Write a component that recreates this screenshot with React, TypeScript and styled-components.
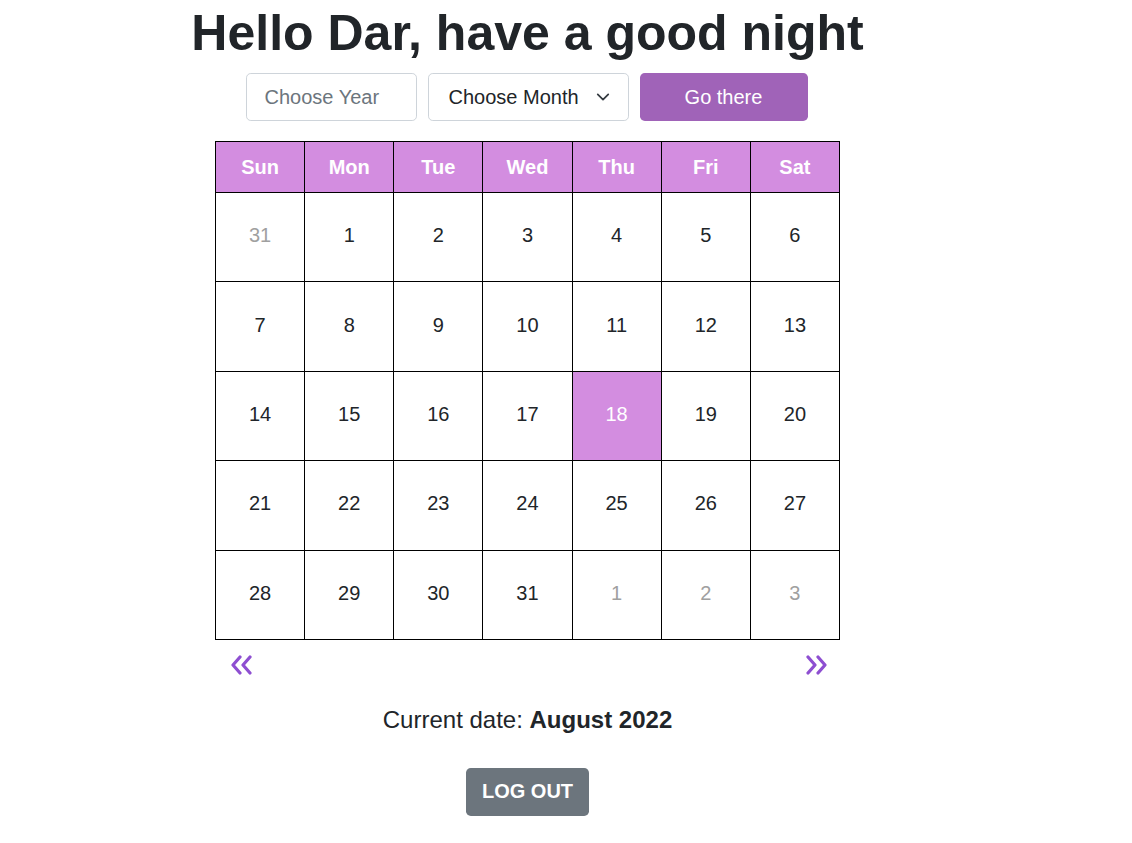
import React from "react";
import styled, { createGlobalStyle } from "styled-components";

const Global = createGlobalStyle`
  html, body { margin: 0; padding: 0; background: #fff; }
  body { font-family: "Liberation Sans", Arial, sans-serif; color: #212529; }
  * { box-sizing: border-box; }
`;

const Page = styled.div`
  width: 1055px;
  display: flex;
  flex-direction: column;
  align-items: center;
`;

const Title = styled.h1`
  margin: 3px 0 10px;
  font-size: 50px;
  line-height: 60px;
  font-weight: 700;
  color: #212529;
  white-space: nowrap;
`;

const Controls = styled.div`
  display: flex;
  gap: 11px;
  margin-bottom: 20px;
  margin-left: -2px;
`;

const YearInput = styled.input`
  width: 171px;
  height: 48px;
  padding: 0 18px;
  font-family: inherit;
  font-size: 20px;
  color: #212529;
  border: 1px solid #ced4da;
  border-radius: 4.8px;
  outline: none;
  &::placeholder { color: #6c757d; }
`;

const SelectWrap = styled.div`
  position: relative;
  width: 201px;
  height: 48px;
`;

const MonthSelect = styled.select`
  appearance: none;
  width: 100%;
  height: 100%;
  padding: 0 40px 0 20px;
  font-family: inherit;
  font-size: 20px;
  color: #212529;
  background: #fff;
  border: 1px solid #ced4da;
  border-radius: 4.8px;
  outline: none;
`;

const Caret = styled.svg`
  position: absolute;
  right: 19px;
  top: 18px;
  width: 14px;
  height: 12px;
  pointer-events: none;
`;

const GoButton = styled.button`
  width: 168px;
  height: 48px;
  border: none;
  border-radius: 4.8px;
  background: #a063b8;
  color: #fff;
  font-family: inherit;
  font-size: 20px;
`;

const Calendar = styled.table`
  width: 625px;
  border-collapse: collapse;
  table-layout: fixed;
  border: 1px solid #000;
`;

const HeadCell = styled.th`
  height: 51px;
  background: #d38de0;
  color: #fff;
  font-size: 20px;
  font-weight: 700;
  border: 1px solid #000;
  padding: 0;
`;

const DayCell = styled.td<{ $muted?: boolean; $today?: boolean }>`
  height: 89.4px;
  text-align: center;
  vertical-align: middle;
  font-size: 20px;
  border: 1px solid #000;
  padding: 0 0 3px;
  color: ${(p) => (p.$today ? "#fff" : p.$muted ? "#a0a0a0" : "#212529")};
  background: ${(p) => (p.$today ? "#d38de0" : "#fff")};
`;

const NavRow = styled.div`
  width: 625px;
  display: flex;
  justify-content: space-between;
  padding: 15px 13px 0 16px;
  height: 55px;
`;

const NavButton = styled.button`
  border: none;
  background: none;
  padding: 0;
  width: 21px;
  height: 20px;
  cursor: pointer;
  display: flex;
`;

const CurrentDate = styled.p`
  margin: 7px 0 0;
  font-size: 24px;
  line-height: 36px;
  color: #212529;
  strong { font-weight: 700; }
`;

const LogOut = styled.button`
  margin-top: 30px;
  width: 123px;
  height: 48px;
  border: none;
  border-radius: 4.8px;
  background: #6c757d;
  color: #fff;
  font-family: inherit;
  font-size: 20px;
  font-weight: 700;
`;

const days = ["Sun", "Mon", "Tue", "Wed", "Thu", "Fri", "Sat"];

type Cell = { n: number; muted?: boolean };
const cells: Cell[] = [
  { n: 31, muted: true },
  ...Array.from({ length: 31 }, (_, i) => ({ n: i + 1 })),
  { n: 1, muted: true },
  { n: 2, muted: true },
  { n: 3, muted: true },
];
const weeks: Cell[][] = [];
for (let i = 0; i < cells.length; i += 7) weeks.push(cells.slice(i, i + 7));

const Chevrons = ({ dir }: { dir: "left" | "right" }) => (
  <svg width="21" height="20" viewBox="0 0 21 20" fill="none" stroke="#8e4fd1" strokeWidth="3.2" strokeLinecap="round" strokeLinejoin="round">
    {dir === "left" ? (
      <>
        <polyline points="9,2 2,10 9,18" />
        <polyline points="19,2 12,10 19,18" />
      </>
    ) : (
      <>
        <polyline points="2,2 9,10 2,18" />
        <polyline points="12,2 19,10 12,18" />
      </>
    )}
  </svg>
);

export default function App() {
  return (
    <>
      <Global />
      <Page>
        <Title>Hello Dar, have a good night</Title>
        <Controls>
          <YearInput placeholder="Choose Year" />
          <SelectWrap>
            <MonthSelect defaultValue="">
              <option value="">Choose Month</option>
            </MonthSelect>
            <Caret viewBox="0 0 16 12">
              <path d="M2 3l6 6 6-6" fill="none" stroke="#343a40" strokeWidth="2" strokeLinecap="round" strokeLinejoin="round" />
            </Caret>
          </SelectWrap>
          <GoButton>Go there</GoButton>
        </Controls>
        <Calendar>
          <thead>
            <tr>
              {days.map((d) => (
                <HeadCell key={d}>{d}</HeadCell>
              ))}
            </tr>
          </thead>
          <tbody>
            {weeks.map((w, wi) => (
              <tr key={wi}>
                {w.map((c, ci) => (
                  <DayCell key={ci} $muted={c.muted} $today={!c.muted && c.n === 18}>
                    {c.n}
                  </DayCell>
                ))}
              </tr>
            ))}
          </tbody>
        </Calendar>
        <NavRow>
          <NavButton aria-label="previous">
            <Chevrons dir="left" />
          </NavButton>
          <NavButton aria-label="next">
            <Chevrons dir="right" />
          </NavButton>
        </NavRow>
        <CurrentDate>
          Current date: <strong>August 2022</strong>
        </CurrentDate>
        <LogOut>LOG OUT</LogOut>
      </Page>
    </>
  );
}
